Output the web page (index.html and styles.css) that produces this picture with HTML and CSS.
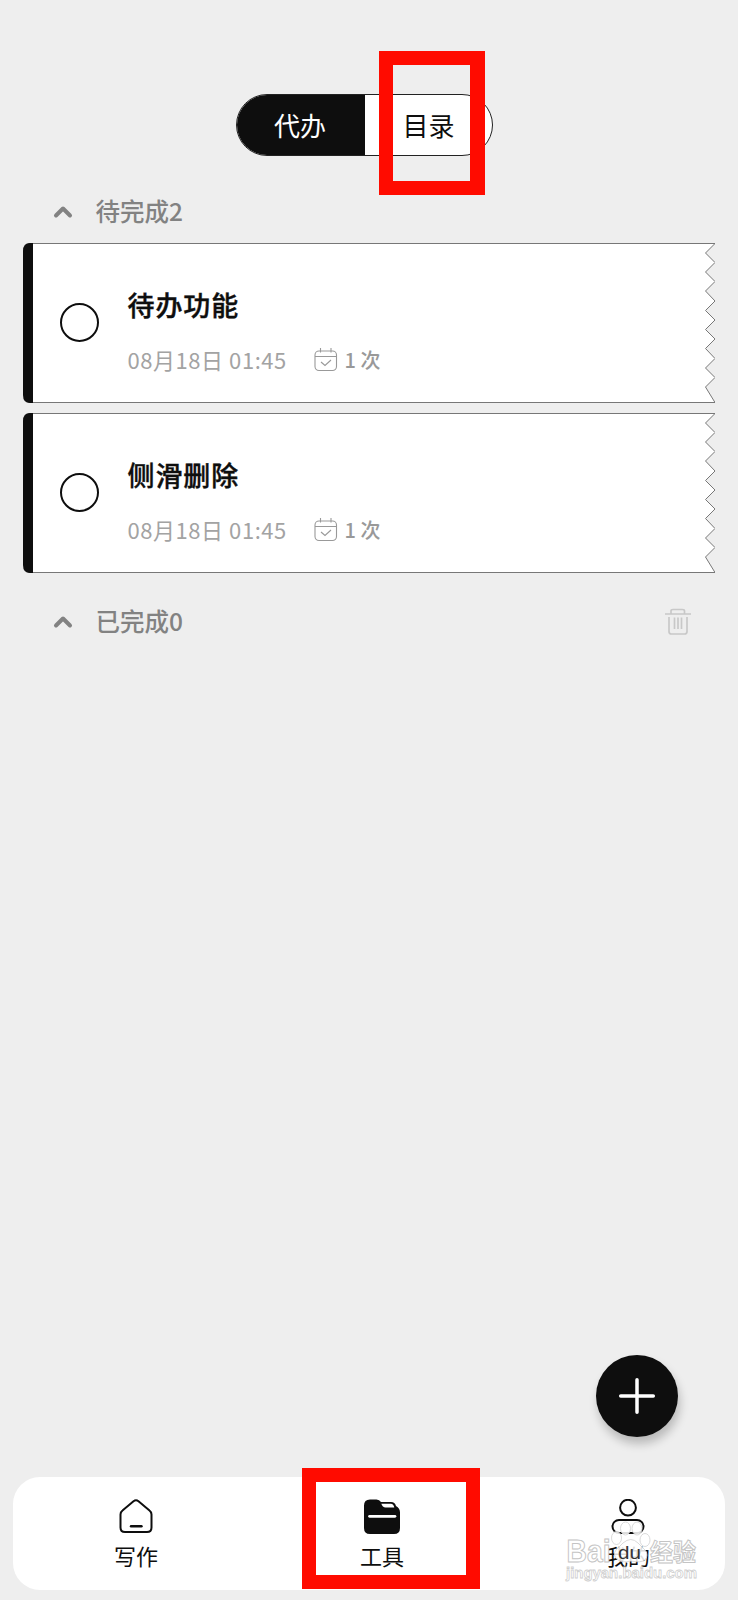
FILE: index.html
```html
<!DOCTYPE html>
<html lang="zh-CN">
<head>
<meta charset="utf-8">
<title>工具</title>
<link rel="stylesheet" href="styles.css">
</head>
<body>
<div class="screen">
  <header class="header">
    <div class="toggle">
      <span class="tab tab-active">代办</span>
      <span class="tab">目录</span>
    </div>
    <div class="mark mark-top"></div>
  </header>

  <main class="content">
    <div class="section section-first">
      <svg class="chevron" viewBox="0 0 20 14"><path d="M3 10.500L10 3.500L17 10.500"/></svg>
      <span class="section-name">待完成2</span>
    </div>

    <div class="cards">
      <article class="card">
        <svg class="ticket" viewBox="0 0 692 160"><path class="paper" d="M5.5.5H692L682.500 10L692 19.500L682.500 29L692 38.500L682.500 48L692 58L682.500 67.500L692 77L682.500 86.500L692 96L682.500 105.500L692 115.500L682.500 125L692 134.500L682.500 144L692 159.500H5.5Z"/><path class="spine" d="M10 0V160H7Q0 160 0 152V8Q0 0 7 0Z"/></svg>
        <div class="card-row">
          <span class="circle"></span>
          <div class="card-body">
            <h2 class="title">待办功能</h2>
            <div class="meta">
              <span class="date">08月18日 01:45</span>
              <svg class="calendar" viewBox="0 0 24 24"><rect x="1" y="3" width="21.500" height="19.500" rx="4"/><path d="M1 8.500H22.500M6.500 0V4.500M17 0V4.500M7 14L11 17.500L17 12"/></svg>
              <span class="times">1 次</span>
            </div>
          </div>
        </div>
      </article>

      <article class="card">
        <svg class="ticket" viewBox="0 0 692 160"><path class="paper" d="M5.5.5H692L682.500 10L692 19.500L682.500 29L692 38.500L682.500 48L692 58L682.500 67.500L692 77L682.500 86.500L692 96L682.500 105.500L692 115.500L682.500 125L692 134.500L682.500 144L692 159.500H5.5Z"/><path class="spine" d="M10 0V160H7Q0 160 0 152V8Q0 0 7 0Z"/></svg>
        <div class="card-row">
          <span class="circle"></span>
          <div class="card-body">
            <h2 class="title">侧滑删除</h2>
            <div class="meta">
              <span class="date">08月18日 01:45</span>
              <svg class="calendar" viewBox="0 0 24 24"><rect x="1" y="3" width="21.500" height="19.500" rx="4"/><path d="M1 8.500H22.500M6.500 0V4.500M17 0V4.500M7 14L11 17.500L17 12"/></svg>
              <span class="times">1 次</span>
            </div>
          </div>
        </div>
      </article>
    </div>

    <div class="section section-done">
      <svg class="chevron" viewBox="0 0 20 14"><path d="M3 10.500L10 3.500L17 10.500"/></svg>
      <span class="section-name">已完成0</span>
      <svg class="trash" viewBox="0 0 26 28"><path d="M0 6H26M6 6V3Q6 1.500 8 1.500H17.500Q19.500 1.500 19.500 3V6M4 9V23.500Q4 26 6.500 26H19.500Q22 26 22 23.500V9M9.500 9.500V21M13 9.500V21M16.500 9.500V21"/></svg>
    </div>
  </main>

  <button class="fab" aria-label="添加"><svg viewBox="0 0 40 40"><path d="M20 3.700V36.300M3.700 20H36.300"/></svg></button>

  <nav class="nav">
    <div class="nav-item">
      <svg class="nav-icon" viewBox="0 0 36 36"><path d="M15.500 2.200Q18 .3 20.500 2.200L31.500 11.500Q33.500 13 33.500 15.500V28.500Q33.500 33 29 33H7Q2.500 33 2.500 28.500V15.500Q2.500 13 4.500 11.500Z"/><path d="M13 27.300H23.500" stroke-width="2.400" stroke-linecap="round"/></svg>
      <span class="nav-name">写作</span>
    </div>
    <div class="nav-item">
      <svg class="nav-icon" viewBox="0 0 36 36"><path d="M6 .5H12.500Q15.500 .5 17 3H27Q31 3 32 7Q36 9 36 13.500V29Q36 35 30 35H6Q0 35 0 29V6.500Q0 .5 6 .5Z" fill="#0e0e0e" stroke="none"/><path d="M17.300 4.800H26.800Q29.600 5 30.300 8.500H21.500Q18.500 8.300 17.300 4.800Z" fill="#fff" stroke="none"/><path d="M5.500 17.300H31" stroke="#fff" stroke-width="2.700" stroke-linecap="round"/></svg>
      <span class="nav-name">工具</span>
    </div>
    <div class="nav-item">
      <svg class="nav-icon" viewBox="0 0 36 36"><circle cx="18" cy="8.700" r="7.900"/><rect x="2.500" y="21" width="31" height="13" rx="6.500"/></svg>
      <span class="nav-name">我的</span>
    </div>
    <div class="mark mark-bottom"></div>
    <svg class="watermark" viewBox="0 0 150 80">
      <g class="paw"><ellipse cx="66.500" cy="29" rx="5" ry="6.500"/><ellipse cx="75.500" cy="19.500" rx="5" ry="6.500"/><ellipse cx="87" cy="19.500" rx="5" ry="6.500"/><ellipse cx="95" cy="31" rx="5" ry="6.500"/><path d="M73 34Q81 27 88 34L95 41Q99 46 95 51Q91 54 81 52Q72 54 68 51Q62 46 66 41Z"/></g>
      <text class="wm-logo" x="16.500" y="53" textLength="44" lengthAdjust="spacingAndGlyphs">Bai</text>
      <text class="wm-du" x="68" y="50" textLength="23" lengthAdjust="spacingAndGlyphs">du</text>
      <text class="wm-logo wm-cjk" x="100" y="52" textLength="46" lengthAdjust="spacingAndGlyphs">经验</text>
      <text class="wm-url" x="16" y="69" textLength="131" lengthAdjust="spacingAndGlyphs">jingyan.baidu.com</text>
    </svg>
  </nav>
</div>
</body>
</html>
```
FILE: styles.css
```css
* {
  box-sizing: border-box;
}

body {
  margin: 0;
  background: #eee;
  color: #0e0e0e;
  font-family: "Noto Sans CJK SC", sans-serif;
}

svg {
  display: block;
  fill: none;
  flex: none;
}

.screen {
  position: relative;
  display: flex;
  flex-direction: column;
  width: 738px;
  height: 1600px;
  overflow: hidden;
}

.header {
  position: relative;
  height: 192px;
  padding: 94px 0 0 236px;
}

.toggle {
  display: flex;
  width: 257px;
  height: 62px;
  border: 1px solid #222;
  border-radius: 31px;
  background: #fff;
  overflow: hidden;
}

.tab {
  flex: 1;
  font-size: 26px;
  line-height: 59px;
  text-align: center;
}

.tab-active {
  flex: 0 0 128px;
  padding-right: 2px;
  background: #0e0e0e;
  color: #fff;
}

.mark {
  position: absolute;
  border: 14px solid #ff0b00;
}

.mark-top {
  left: 379px;
  top: 51px;
  width: 106px;
  height: 144px;
  border-right-width: 15px;
}

.mark-bottom {
  left: 289px;
  top: -9px;
  width: 178px;
  height: 121px;
}

.section {
  display: flex;
  align-items: center;
  height: 40px;
  padding: 0 47px 0 53px;
  color: #828282;
}

.section-first {
  margin-bottom: 11px;
}

.section-done {
  margin-top: 29px;
}

.chevron {
  width: 20px;
  height: 14px;
  stroke: #828282;
  stroke-width: 4;
  stroke-linecap: round;
  stroke-linejoin: round;
}

.section-name {
  margin: -2px 0 0 22.5px;
  font-size: 24.5px;
  font-weight: 500;
  line-height: 40px;
}

.trash {
  width: 26px;
  height: 28px;
  margin-left: auto;
  stroke: #c8c8c8;
  stroke-width: 1.7;
}

.cards {
  display: flex;
  flex-direction: column;
  gap: 10px;
  padding-left: 23px;
}

.card {
  display: grid;
  width: 692px;
  height: 160px;
}

.ticket,
.card-row {
  grid-area: 1 / 1;
}

.ticket {
  width: 692px;
  height: 160px;
}

.paper {
  fill: #fff;
  stroke: #777;
}

.spine {
  fill: #0e0e0e;
}

.card-row {
  display: flex;
  align-items: flex-start;
  padding-left: 37px;
}

.circle {
  width: 39px;
  height: 39px;
  margin-top: 60px;
  border: 2.5px solid #0e0e0e;
  border-radius: 50%;
}

.card-body {
  margin-left: 28.5px;
  padding-top: 42px;
}

.title {
  margin: 0 0 20px;
  font-size: 27px;
  font-weight: 500;
  line-height: 40px;
  letter-spacing: 0.9px;
  -webkit-text-stroke: 0.4px #0e0e0e;
}

.meta {
  display: flex;
  align-items: center;
  height: 30px;
  color: #a3a3a3;
  line-height: 30px;
}

.date {
  width: 159px;
  margin-top: -3px;
  font-size: 22px;
  letter-spacing: 0.55px;
  white-space: nowrap;
}

.calendar {
  width: 24px;
  height: 24px;
  margin-left: 27px;
  stroke: #999;
  stroke-width: 1.1;
}

.times {
  margin-left: 7px;
  font-size: 20px;
  font-weight: 500;
  color: #999;
}

.fab {
  display: flex;
  align-items: center;
  justify-content: center;
  width: 82px;
  height: 82px;
  margin: auto 60px 40px auto;
  padding: 0;
  border: 0;
  border-radius: 50%;
  background: #0e0e0e;
  box-shadow: 2px 7px 10px rgba(0, 0, 0, 0.22);
}

.fab svg {
  width: 40px;
  height: 40px;
  stroke: #fff;
  stroke-width: 3.5;
  stroke-linecap: round;
}

.nav {
  position: relative;
  display: grid;
  grid-template-columns: 246px 246px 246px;
  width: 712px;
  height: 113px;
  margin: 0 0 10px 13px;
  border-radius: 27px;
  background: #fff;
}

.nav-item {
  display: flex;
  flex-direction: column;
  align-items: center;
  padding-top: 22px;
}

.nav-icon {
  width: 36px;
  height: 36px;
  stroke: #0e0e0e;
  stroke-width: 2;
}

.nav-name {
  margin-top: 4px;
  font-size: 22px;
  line-height: 32px;
}

.watermark {
  position: absolute;
  left: 537px;
  top: 32px;
  width: 150px;
  height: 80px;
}

.paw {
  fill: #fff;
  fill-opacity: 0.85;
  stroke: #d0d0d0;
  stroke-width: 0.8;
}

.wm-logo {
  fill: #fff;
  stroke: #c4c4c4;
  stroke-width: 1;
  font: bold 31px "Liberation Sans", sans-serif;
}

.wm-cjk {
  font: bold 24px "Noto Sans CJK SC", sans-serif;
}

.wm-du {
  fill: #333;
  font: 18px "Liberation Sans", sans-serif;
}

.wm-url {
  fill: #fff;
  stroke: #cfcfcf;
  stroke-width: 0.8;
  font: bold 15.5px "Liberation Sans", sans-serif;
}
```
